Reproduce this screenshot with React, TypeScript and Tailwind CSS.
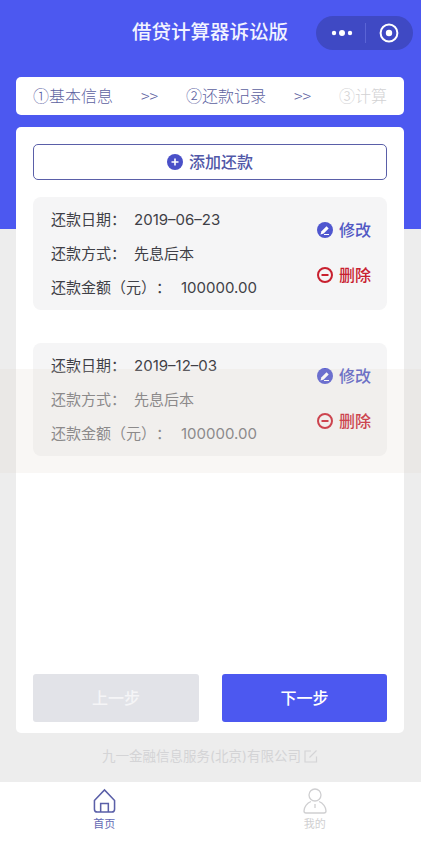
const cjk = "font-['Inter','Noto_Sans_CJK_SC',sans-serif] [text-spacing-trim:space-all]";

function Row({ label, value, gap, faded }: { label: string; value: string; gap: string; faded?: boolean }) {
  return (
    <div className={`flex items-center h-[34px] text-[15px] ${gap} ${faded ? 'text-[#77777a]' : 'text-[#3f3f46]'}`}>
      <span>{label}</span>
      <span>{value}</span>
    </div>
  );
}

function Repayment({ date, amount, faded }: { date: string; amount: string; faded?: boolean }) {
  return (
    <div className="flex justify-between h-[113px] rounded-lg bg-[#f5f5f6] pl-[18px] pr-[16px] pt-[6px]">
      <div>
        <Row label="还款日期：" value={date} gap="gap-[8px]" />
        <Row label="还款方式：" value="先息后本" gap="gap-[8px]" faded={faded} />
        <Row label="还款金额（元）：" value={amount} gap="gap-[10px]" faded={faded} />
      </div>
      <div className="flex flex-col gap-[23px] pt-[16px]">
        <button className="flex items-center gap-[6px] h-[22px] text-[16px] font-medium text-[#5158c4]">
          <svg width="16" height="16" viewBox="0 0 16 16">
            <circle cx="8" cy="8" r="8" fill="#4f56cf" />
            <path d="M3.500 12.500l1-3.200 5-5 2.200 2.200-5 5z" fill="#fff" />
            <path d="M7 12.500h5" stroke="#fff" strokeWidth="1" />
          </svg>
          修改
        </button>
        <button className="flex items-center gap-[6px] h-[22px] text-[16px] font-medium text-[#c8202f]">
          <svg width="16" height="16" viewBox="0 0 16 16" fill="none" stroke="#c8202f" strokeWidth="2">
            <circle cx="8" cy="8" r="7" />
            <path d="M4.500 8h7" />
          </svg>
          删除
        </button>
      </div>
    </div>
  );
}

export default function App() {
  return (
    <div className={`relative flex flex-col h-[843px] w-[421px] overflow-hidden bg-[#ededed] ${cjk}`}>
      <div className="relative flex flex-col flex-1 bg-[linear-gradient(#4c58f0_229px,#ededed_229px)] pl-4 pr-[17px]">
        {/* nav bar */}
        <div className="relative flex items-center justify-center h-[66px] shrink-0">
          <span className="text-[19.500px] font-medium text-[#f2f3ff]">借贷计算器诉讼版</span>
          <div className="absolute right-[-9px] top-[16px] flex items-center w-[97px] h-[34px] rounded-full bg-[#3f49c4]">
            <svg width="22" height="8" viewBox="0 0 22 8" className="ml-[15px]" fill="#fff">
              <circle cx="3" cy="4" r="2.200" />
              <circle cx="11" cy="4" r="3" />
              <circle cx="19" cy="4" r="2.200" />
            </svg>
            <div className="ml-[12px] w-px h-[20px] bg-[#5a64d6]" />
            <svg width="20" height="20" viewBox="0 0 20 20" className="ml-[13px]">
              <circle cx="10" cy="10" r="8.400" fill="none" stroke="#fff" strokeWidth="2" />
              <circle cx="10" cy="10" r="3.200" fill="#fff" />
            </svg>
          </div>
        </div>

        {/* steps */}
        <div className="flex items-center justify-between h-[38px] mt-[11px] pb-[2px] rounded-[5px] bg-white px-[17px] text-[16px] text-[#5c619f] font-['Noto_Sans_CJK_SC',sans-serif] font-light">
          <span>①基本信息</span>
          <span>&gt;&gt;</span>
          <span>②还款记录</span>
          <span>&gt;&gt;</span>
          <span className="text-[#d2d2d4]">③计算</span>
        </div>

        {/* main card */}
        <div className="flex flex-col h-[606px] mt-3 rounded-[5px] bg-white px-[17px] pt-[17px]">
          <button className="flex items-center justify-center gap-[6px] h-9 shrink-0 rounded-[5px] border border-[#5a5fa8] text-[16px] font-medium text-[#5158a8]">
            <svg width="16" height="16" viewBox="0 0 16 16">
              <circle cx="8" cy="8" r="8" fill="#4a50c8" />
              <path d="M8 4.500v7M4.500 8h7" stroke="#fff" strokeWidth="1.600" />
            </svg>
            添加还款
          </button>
          <div className="flex flex-col gap-[33px] mt-[17px]">
            <Repayment date="2019–06–23" amount="100000.00" />
            <Repayment date="2019–12–03" amount="100000.00" faded />
          </div>
          <div className="flex justify-between mt-auto mb-[11px]">
            <button className="w-[166px] h-12 rounded-[3px] bg-[#e2e3e8] text-[16px] font-medium text-[#f5f5f7]">上一步</button>
            <button className="w-[165px] h-12 rounded-[3px] bg-[#4c58f0] text-[16px] font-medium text-white">下一步</button>
          </div>
        </div>

        {/* company line */}
        <div className="flex items-center justify-center gap-[3px] h-[49px] pb-[3px] text-[13.500px] text-[#d4d4d6]">
          九一金融信息服务(北京)有限公司
          <svg width="14" height="14" viewBox="0 0 14 14" fill="none" stroke="#d4d4d6" strokeWidth="1.200">
            <path d="M12.500 7.500V13H1V2h6" />
            <path d="M5.500 8.500L12.500 1.500" />
          </svg>
        </div>
      </div>

      {/* tab bar */}
      <div className="flex h-[61px] shrink-0 bg-white">
        <div className="flex flex-1 flex-col items-center pt-[6px] pr-[2px] text-[11px] text-[#6368b4]">
          <svg width="23" height="26" viewBox="0 0 24 26" fill="none" stroke="#5a5fa8" strokeWidth="1.600">
            <path d="M1.500 12.500L12 1.500l10.500 11v9a3 3 0 0 1-3 3h-15a3 3 0 0 1-3-3z" />
            <path d="M8 24.500v-9h8v9" />
          </svg>
          <span className="mt-[3px] leading-[14px]">首页</span>
        </div>
        <div className="flex flex-1 flex-col items-center pt-[6px] pr-[2px] text-[11px] text-[#cfcfd1]">
          <svg width="24" height="26" viewBox="0 0 24 26" fill="none" stroke="#cfcfd1" strokeWidth="1.300">
            <circle cx="12" cy="7" r="6" />
            <path d="M8 13.500C4 15 1 19 1 23a2 2 0 0 0 2 2h18a2 2 0 0 0 2-2c0-4-3-8-7-9.500" />
            <path d="M12 16v4" />
          </svg>
          <span className="mt-[3px] leading-[14px]">我的</span>
        </div>
      </div>

      {/* translucent band over the page */}
      <div className="absolute left-0 right-0 top-[369px] h-[104px] bg-[#e3d7cb]/20" />
    </div>
  );
}
